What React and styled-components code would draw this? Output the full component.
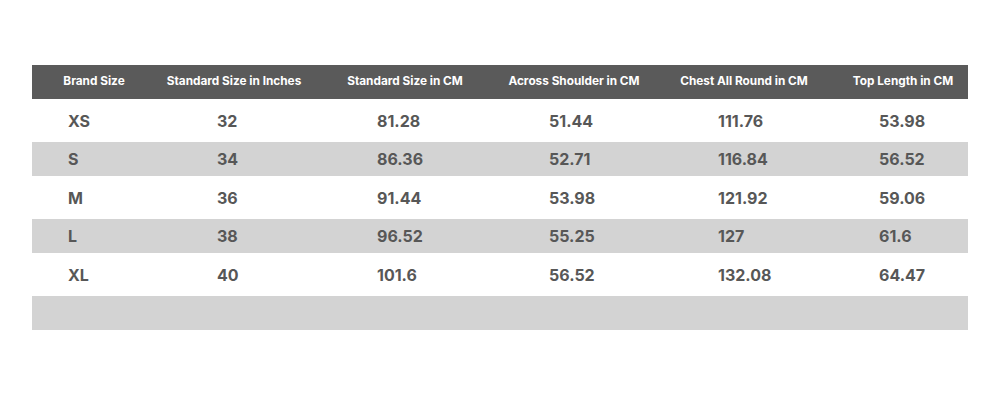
import React from "react";
import styled, { createGlobalStyle } from "styled-components";

const Global = createGlobalStyle`
  html, body { margin: 0; padding: 0; background: #ffffff; }
  body { font-family: Inter, "Open Sans", "Liberation Sans", sans-serif; }
`;

const columns = [
  { title: "Brand Size", width: 124, indent: 36 },
  { title: "Standard Size in Inches", width: 156, indent: 61 },
  { title: "Standard Size in CM", width: 186, indent: 65 },
  { title: "Across Shoulder in CM", width: 152, indent: 51 },
  { title: "Chest All Round in CM", width: 188, indent: 68 },
  { title: "Top Length in CM", width: 130, indent: 41 },
];

const rows = [
  ["XS", "32", "81.28", "51.44", "111.76", "53.98"],
  ["S", "34", "86.36", "52.71", "116.84", "56.52"],
  ["M", "36", "91.44", "53.98", "121.92", "59.06"],
  ["L", "38", "96.52", "55.25", "127", "61.6"],
  ["XL", "40", "101.6", "56.52", "132.08", "64.47"],
];

const template = columns.map((c) => `${c.width}px`).join(" ");

const Page = styled.div`
  width: 1000px;
  height: 400px;
  padding: 65px 32px 0;
  box-sizing: border-box;
`;

const Table = styled.div`
  width: 936px;
  display: flex;
  flex-direction: column;
`;

const Row = styled.div`
  display: grid;
  grid-template-columns: ${template};
  height: ${(p) => p.$h}px;
  background: ${(p) => p.$bg};
  align-items: center;
`;

const HeadCell = styled.div`
  color: #ffffff;
  font-size: 11.8px;
  font-weight: 700;
  text-align: center;
  white-space: nowrap;
  margin-top: -2px;
`;

const Cell = styled.div`
  color: #575757;
  font-size: 16px;
  font-weight: 700;
  padding-left: ${(p) => p.$indent}px;
  white-space: nowrap;
`;

export default function App() {
  return (
    <>
      <Global />
      <Page>
        <Table>
          <Row $h={34} $bg="#5a5a5a">
            {columns.map((c) => (
              <HeadCell key={c.title}>{c.title}</HeadCell>
            ))}
          </Row>
          {rows.map((r, i) => {
            const gray = i % 2 === 1;
            return (
              <Row key={r[0]} $h={gray ? 34 : 43} $bg={gray ? "#d3d3d3" : "#ffffff"}>
                {r.map((v, j) => (
                  <Cell key={j} $indent={columns[j].indent}>
                    {v}
                  </Cell>
                ))}
              </Row>
            );
          })}
          <Row $h={34} $bg="#d3d3d3" />
        </Table>
      </Page>
    </>
  );
}
